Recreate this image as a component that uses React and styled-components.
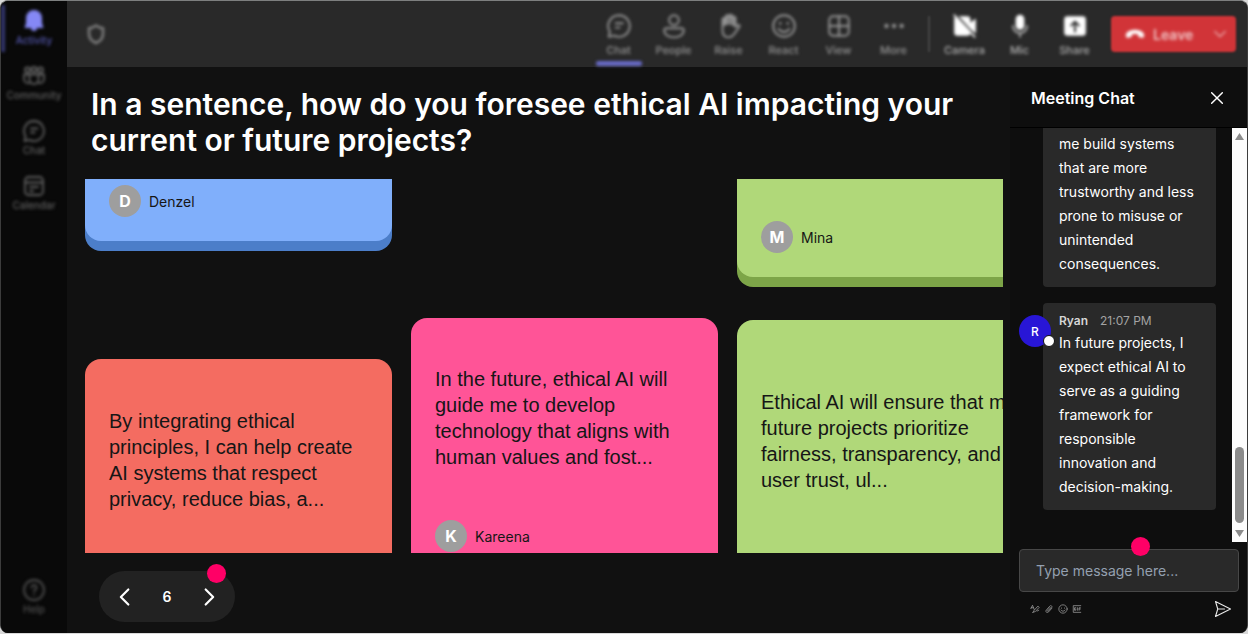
import React from 'react';
import styled, {createGlobalStyle, css} from 'styled-components';

const GlobalStyle = createGlobalStyle`
  *,
  *::after {
    box-sizing: border-box;
  }
  body {
    margin: 0;
    background: #d9d9d9;
    font-family: Inter, 'Noto Sans', sans-serif;
    color: #fff;
  }
  button {
    font-family: inherit;
    color: inherit;
    background: none;
    border: none;
    padding: 0;
    cursor: pointer;
  }
`;

const soften = css`
  filter: blur(1px) blur(1px);
`;

const Frame = styled.div`
  display: flex;
  height: calc(100vh - 1px);
  overflow: hidden;
  border-radius: 8px;
  border: 1px solid #3c3c3c;
  border-top-color: #7d7f7f;
  border-bottom: none;
  background: #111;
`;

const SideNav = styled.nav`
  display: flex;
  flex-direction: column;
  flex: none;
  width: 66px;
  padding: 4px 0;
  background: #090909;
`;

const SideItem = styled.button`
  display: flex;
  flex-direction: column;
  align-items: center;
  flex: none;
  gap: 1px;
  height: 47px;
  margin-bottom: 8px;
  padding-top: 4px;
  font-size: 10px;
  line-height: 12px;
  font-weight: 500;
  color: #606060;
  border-left: 4px solid transparent;
  border-right: 4px solid transparent;
  ${soften}
  ${(props) =>
    props.$active &&
    css`
      color: #5558b0;
      border-left-color: #34376f;
      svg {
        color: #8588f5;
      }
    `}
  ${(props) =>
    props.$last &&
    css`
      margin-top: auto;
      color: #505050;
    `}
`;

const Content = styled.div`
  display: flex;
  flex-direction: column;
  flex: 1;
  min-width: 0;
`;

const TopBar = styled.header`
  display: flex;
  align-items: center;
  flex: none;
  height: 66px;
  padding: 0 11px 0 17px;
  background: #292929;
`;

const Shield = styled.div`
  display: flex;
  margin-right: auto;
  color: #808080;
  ${soften}
`;

const Tools = styled.div`
  display: flex;
`;

const Tool = styled.button`
  display: flex;
  flex-direction: column;
  align-items: center;
  gap: 4px;
  width: 55px;
  height: 66px;
  padding-top: 12px;
  font-size: 11px;
  line-height: 14px;
  font-weight: 500;
  color: ${(props) => (props.$bright ? '#b0b0b0' : '#949494')};
  ${soften}
  svg {
    color: ${(props) => (props.$bright ? '#fff' : '#949494')};
  }
  &::after {
    content: '';
    width: 46px;
    height: 5px;
    border-radius: 2px;
    background: ${(props) => (props.$active ? '#686bc8' : 'transparent')};
  }
`;

const Divider = styled.div`
  width: 2px;
  height: 36px;
  margin: 0 7px;
  background: #444;
  filter: blur(1px);
`;

const LeaveButton = styled.button`
  display: flex;
  align-items: center;
  gap: 8px;
  width: 125px;
  height: 36px;
  margin-left: 9px;
  padding: 0 8px 0 14px;
  border-radius: 4px;
  background: #d13438;
  color: #f0c4c5;
  font-size: 14px;
  font-weight: 600;
  filter: blur(1px);
  span,
  svg {
    filter: blur(1px);
  }
  svg:first-child {
    color: #fff;
  }
  svg:last-child {
    margin-left: auto;
  }
`;

const Body = styled.div`
  display: flex;
  flex: 1;
  min-height: 0;
`;

const Main = styled.main`
  display: flex;
  flex-direction: column;
  flex: 1;
  min-width: 0;
  padding: 19px 7px 11px 18px;
`;

const Question = styled.h1`
  flex: none;
  margin: 0 6px 21px;
  font-size: 30px;
  line-height: 36px;
  font-weight: 600;
`;

const Board = styled.div`
  display: flex;
  gap: 19px;
  flex: 1;
  min-height: 0;
  overflow: hidden;
`;

const Column = styled.div`
  flex: none;
  width: 307px;
  padding-top: ${(props) => props.$offset || 0}px;
`;

const Card = styled.article`
  min-height: ${(props) => (props.$scrolled ? 0 : 260)}px;
  margin-bottom: ${(props) => props.$gap || 0}px;
  padding: ${(props) => props.$top}px 24px 24px;
  border-radius: ${(props) => (props.$scrolled ? '0 0 16px 16px' : '16px')};
  background: ${(props) => props.$color};
  box-shadow: 0 10px 0 ${(props) => props.$edge};
  color: #161616;
`;

const Answer = styled.p`
  margin: 0 0 50px;
  font-family: 'Liberation Sans', Arial, sans-serif;
  font-size: 20px;
  line-height: 26px;
`;

const Author = styled.div`
  display: flex;
  align-items: center;
  gap: 8px;
  font-size: 14px;
`;

const Initial = styled.span`
  display: flex;
  align-items: center;
  justify-content: center;
  width: 32px;
  height: 32px;
  border-radius: 50%;
  background: #9e9e9e;
  color: #fff;
  font-size: 16px;
  font-weight: 700;
`;

const Pager = styled.div`
  position: relative;
  display: flex;
  align-items: center;
  justify-content: space-between;
  flex: none;
  width: 136px;
  height: 51px;
  margin: 18px 0 0 14px;
  padding: 0 16px;
  border-radius: 26px;
  background: #222;
  font-size: 14px;
  font-weight: 600;
  button {
    display: flex;
  }
`;

const Marker = styled.span`
  position: absolute;
  top: ${(props) => props.$top}px;
  right: ${(props) => props.$right}px;
  width: 19px;
  height: 19px;
  border-radius: 50%;
  background: #ff0066;
`;

const ChatPanel = styled.aside`
  display: flex;
  flex-direction: column;
  flex: none;
  width: 237px;
  background: #0e0e0e;
`;

const ChatHeader = styled.div`
  display: flex;
  align-items: center;
  justify-content: space-between;
  flex: none;
  height: 61px;
  padding: 2px 22px 0 21px;
  border-bottom: 1px solid #000;
  h2 {
    margin: 0;
    font-size: 16px;
    font-weight: 600;
  }
  button {
    display: flex;
  }
`;

const ChatBody = styled.div`
  display: flex;
  flex: 1;
  min-height: 0;
`;

const Messages = styled.div`
  display: flex;
  flex-direction: column;
  justify-content: flex-end;
  gap: 16px;
  flex: 1;
  min-width: 0;
  padding: 0 16px 32px 33px;
  overflow: hidden;
`;

const Bubble = styled.div`
  position: relative;
  padding: 8px 16px 11px;
  border-radius: 4px;
  background: #292929;
  p {
    margin: 0;
    font-size: 14px;
    line-height: 24px;
  }
`;

const BubbleHead = styled.div`
  display: flex;
  gap: 12px;
  font-size: 12px;
  line-height: 20px;
  color: #a3a3a3;
  strong {
    font-weight: 600;
    color: #d6d6d6;
  }
`;

const Avatar = styled.span`
  position: absolute;
  top: 12px;
  left: -24px;
  display: flex;
  align-items: center;
  justify-content: center;
  width: 32px;
  height: 32px;
  border-radius: 50%;
  background: #2816d6;
  font-size: 12px;
  font-weight: 500;
  &::after {
    content: '';
    position: absolute;
    right: -4px;
    bottom: 0;
    width: 12px;
    height: 12px;
    border: 1px solid #111;
    border-radius: 50%;
    background: #fff;
  }
`;

const Scrollbar = styled.div`
  display: flex;
  flex-direction: column;
  align-items: center;
  width: 15px;
  padding: 5px 0;
  background: #fcfcfc;
`;

const Thumb = styled.div`
  width: 9px;
  height: 76px;
  margin: auto 0 7px;
  border-radius: 5px;
  background: #8b8b8b;
`;

const Composer = styled.form`
  position: relative;
  flex: none;
  padding: 7px 8px 15px 9px;
`;

const MessageInput = styled.input`
  display: block;
  width: 100%;
  height: 43px;
  padding: 0 16px;
  border: 1px solid #474747;
  border-radius: 4px;
  background: #292929;
  color: #fff;
  font-family: inherit;
  font-size: 14px;
  &::placeholder {
    color: #94a0b0;
    opacity: 1;
  }
`;

const ComposerTools = styled.div`
  display: flex;
  align-items: center;
  gap: 4px;
  margin-top: 8px;
  padding: 0 7px 0 11px;
  button {
    display: flex;
    color: #a0a0a0;
  }
  button:last-child {
    margin-left: auto;
    color: #e4e4e4;
  }
`;

function Icon({size = 24, width = 1.8, children}) {
  return (
    <svg
      width={size}
      height={size}
      viewBox="0 0 24 24"
      fill="none"
      stroke="currentColor"
      strokeWidth={width}
      strokeLinecap="round"
      strokeLinejoin="round"
      aria-hidden="true"
    >
      {children}
    </svg>
  );
}

const drawings = {
  bell: (
    <path
      d="M12 1a8 8 0 0 0-8 8v5l-1.500 5h19L20 14V9a8 8 0 0 0-8-8Zm-3 18a3 3 0 0 0 6 0Z"
      fill="currentColor"
      stroke="none"
    />
  ),
  community: (
    <>
      <circle cx="5.500" cy="6" r="2.500" />
      <circle cx="12" cy="5.500" r="2.500" />
      <circle cx="18.500" cy="6" r="2.500" />
      <path d="M7.500 10.500h9v5a4.500 4.500 0 0 1-9 0v-5Z" />
      <path d="M7 10.500H2V15a4 4 0 0 0 5.500 3.800M17 10.500h5V15a4 4 0 0 1-5.500 3.800" />
    </>
  ),
  chat: (
    <>
      <path d="M12 2a10 10 0 1 1-4.600 18.900L2.500 22l1.100-4.600A10 10 0 0 1 12 2Z" />
      <path d="M9 9.500h6.500M9 13.500h3.500" />
    </>
  ),
  calendar: (
    <>
      <rect x="3" y="3" width="18" height="18" rx="3.500" />
      <path d="M3 8.500h18M8 13h8M8 17h3" />
    </>
  ),
  help: (
    <>
      <circle cx="12" cy="12" r="10" />
      <path d="M9.500 9.500a2.500 2.500 0 1 1 3.800 2.200c-.9.600-1.300 1-1.300 2.100M12 16.800v.2" />
    </>
  ),
  shield: <path d="M12 3.500c2 1.500 4.500 2.500 7 2.700V12c0 4.500-2.500 7-7 9-4.500-2-7-4.500-7-9V6.200c2.500-.2 5-1.200 7-2.700Z" />,
  people: (
    <>
      <circle cx="12" cy="6.500" r="4.500" />
      <path d="M5 14h14a2 2 0 0 1 2 2c0 4-4 6.500-9 6.500S3 20 3 16a2 2 0 0 1 2-2Z" />
    </>
  ),
  raise: (
    <>
      <path d="M6 13V6a1.500 1.500 0 0 1 3 0V3.500a1.500 1.500 0 0 1 3 0V3a1.500 1.500 0 0 1 3 0v2a1.500 1.500 0 0 1 3 0v8l2-1.800c1.500-.7 2.300.6 1.500 1.700L17 19c-1.500 2.500-3 3.500-5.500 3.500C8 22.500 6 20 6 16Z" />
      <path d="M7.500 6v5M10 4v6M13 3v7M16 5v6" strokeWidth="2.500" />
    </>
  ),
  react: (
    <>
      <circle cx="12" cy="12" r="10" />
      <path d="M8.500 9.500v.2M15.500 9.500v.2" strokeWidth="2.500" />
      <path d="M7 14.500c2.500 4 7.500 4 10 0" />
    </>
  ),
  view: (
    <>
      <rect x="3" y="3" width="18" height="18" rx="3.500" />
      <path d="M12 3v18M3 12h18" />
    </>
  ),
  more: <path d="M5 12h.1M12 12h.1M19 12h.1" strokeWidth="4" />,
  camera: (
    <>
      <path d="M3 3h11a3 3 0 0 1 3 3v3l5-4v14l-5-4v3a3 3 0 0 1-3 3H5a3 3 0 0 1-3-3V5Z" fill="currentColor" stroke="none" />
      <path d="M4 2l18 20" stroke="#292929" strokeWidth="2" />
      <path d="M2 2l19 20" strokeWidth="1.500" />
    </>
  ),
  mic: (
    <>
      <rect x="8" y="1.500" width="8" height="14" rx="4" fill="currentColor" stroke="none" />
      <path d="M5.500 12a6.500 6.500 0 0 0 13 0M12 18.500V22" opacity="0.6" />
    </>
  ),
  share: (
    <>
      <rect x="2" y="3" width="20" height="18" rx="3" fill="currentColor" stroke="none" />
      <path d="M12 17V8.500M8.500 11.500 12 8l3.500 3.500" stroke="#292929" />
    </>
  ),
  hangup: (
    <path
      d="M12 7C6.500 7 1 9.500 1 13.500c0 2.500 1.200 3.300 3 3l2.500-.6c1-.3 1.700-1.200 1.800-2.200l.1-1.200c2.400-.7 4.800-.7 7.200 0l.1 1.200c.1 1 .8 1.900 1.800 2.200l2.500.6c1.800.3 3-.5 3-3C23 9.500 17.500 7 12 7Z"
      fill="currentColor"
      stroke="none"
    />
  ),
  down: <path d="m4 8 8 8 8-8" />,
  left: <path d="M16 3 7 12l9 9" />,
  right: <path d="m8 3 9 9-9 9" />,
  close: <path d="m4 4 16 16M20 4 4 20" />,
  format: (
    <>
      <path d="M2 11 6 3l4 10M3 9h5" />
      <path d="m7 20 3-5 9-10 3 3-9 10-6 2ZM17 17l4-2" />
    </>
  ),
  attach: <path d="m19 10-8 9c-4 4-9-1-5-5l8-9c3-3 7 1 4 4l-8 8c-2 1-3-1-2-2l7-7" />,
  gif: <path d="M21 4H3v16h18M9 9H6v6h3v-3M13 9v6M20 9h-3v6M17 12h3" />,
  send: <path d="M2 2 22 12 2 22l3-10L2 2ZM5 12h9" />,
};

const sideItems = [
  {label: 'Activity', icon: 'bell', active: true},
  {label: 'Community', icon: 'community'},
  {label: 'Chat', icon: 'chat'},
  {label: 'Calendar', icon: 'calendar'},
  {label: 'Help', icon: 'help', last: true},
];

const meetingTools = [
  {label: 'Chat', icon: 'chat', active: true},
  {label: 'People', icon: 'people'},
  {label: 'Raise', icon: 'raise'},
  {label: 'React', icon: 'react'},
  {label: 'View', icon: 'view'},
  {label: 'More', icon: 'more'},
];

const deviceTools = [
  {label: 'Camera', icon: 'camera'},
  {label: 'Mic', icon: 'mic'},
  {label: 'Share', icon: 'share'},
];

const columns = [
  {
    cards: [
      {name: 'Denzel', color: '#80affb', edge: '#4c7ec9', top: 6, gap: 118, scrolled: true},
      {
        text: 'By integrating ethical principles, I can help create AI systems that respect privacy, reduce bias, a...',
        color: '#f46c61',
        edge: '#c14a41',
        top: 49,
      },
    ],
  },
  {
    offset: 139,
    cards: [
      {
        name: 'Kareena',
        text: 'In the future, ethical AI will guide me to develop technology that aligns with human values and fost...',
        color: '#ff5497',
        edge: '#c93a72',
        top: 48,
      },
    ],
  },
  {
    cards: [
      {name: 'Mina', color: '#b0d879', edge: '#7da548', top: 42, gap: 43, scrolled: true},
      {
        text: 'Ethical AI will ensure that my future projects prioritize fairness, transparency, and user trust, ul...',
        color: '#b0d879',
        edge: '#7da548',
        top: 69,
      },
    ],
  },
];

function StickyCard({card}) {
  return (
    <Card
      $color={card.color}
      $edge={card.edge}
      $top={card.top}
      $gap={card.gap}
      $scrolled={card.scrolled}
    >
      {card.text && <Answer>{card.text}</Answer>}
      {card.name && (
        <Author>
          <Initial>{card.name[0]}</Initial>
          {card.name}
        </Author>
      )}
    </Card>
  );
}

function Chat() {
  return (
    <ChatPanel>
      <ChatHeader>
        <h2>Meeting Chat</h2>
        <button aria-label="Close chat">
          <Icon size={16} width={2.2}>{drawings.close}</Icon>
        </button>
      </ChatHeader>
      <ChatBody>
        <Messages>
          <Bubble>
            <p>
              me build systems that are more trustworthy and less prone to misuse or unintended
              consequences.
            </p>
          </Bubble>
          <Bubble>
            <Avatar>R</Avatar>
            <BubbleHead>
              <strong>Ryan</strong>
              <span>21:07 PM</span>
            </BubbleHead>
            <p>
              In future projects, I expect ethical AI to serve as a guiding framework for
              responsible innovation and decision-making.
            </p>
          </Bubble>
        </Messages>
        <Scrollbar aria-hidden="true">
          <svg width="9" height="7" viewBox="0 0 9 7">
            <path d="M4.500 0 9 7H0Z" fill="#8b8b8b" />
          </svg>
          <Thumb />
          <svg width="9" height="7" viewBox="0 0 9 7">
            <path d="M4.500 7 9 0H0Z" fill="#8b8b8b" />
          </svg>
        </Scrollbar>
      </ChatBody>
      <Composer onSubmit={(ev) => ev.preventDefault()}>
        <MessageInput type="text" aria-label="Message" placeholder="Type message here..." />
        <Marker $top={-5} $right={97} />
        <ComposerTools>
          <button type="button" aria-label="Format">
            <Icon size={10}>{drawings.format}</Icon>
          </button>
          <button type="button" aria-label="Attach">
            <Icon size={10}>{drawings.attach}</Icon>
          </button>
          <button type="button" aria-label="Emoji">
            <Icon size={10}>{drawings.react}</Icon>
          </button>
          <button type="button" aria-label="GIF">
            <Icon size={10}>{drawings.gif}</Icon>
          </button>
          <button type="submit" aria-label="Send">
            <Icon size={18} width={1.5}>{drawings.send}</Icon>
          </button>
        </ComposerTools>
      </Composer>
    </ChatPanel>
  );
}

function App() {
  return (
    <>
      <GlobalStyle />
      <Frame>
        <SideNav>
          {sideItems.map((item) => (
            <SideItem key={item.label} $active={item.active} $last={item.last}>
              <Icon>{drawings[item.icon]}</Icon>
              {item.label}
            </SideItem>
          ))}
        </SideNav>
        <Content>
          <TopBar>
            <Shield>
              <Icon width={2.5}>{drawings.shield}</Icon>
            </Shield>
            <Tools>
              {meetingTools.map((item) => (
                <Tool key={item.label} $active={item.active}>
                  <Icon size={26}>{drawings[item.icon]}</Icon>
                  {item.label}
                </Tool>
              ))}
            </Tools>
            <Divider />
            <Tools>
              {deviceTools.map((item) => (
                <Tool key={item.label} $bright>
                  <Icon size={26}>{drawings[item.icon]}</Icon>
                  {item.label}
                </Tool>
              ))}
            </Tools>
            <LeaveButton>
              <Icon size={20}>{drawings.hangup}</Icon>
              <span>Leave</span>
              <Icon size={16}>{drawings.down}</Icon>
            </LeaveButton>
          </TopBar>
          <Body>
            <Main>
              <Question>
                In a sentence, how do you foresee ethical AI impacting your current or future
                projects?
              </Question>
              <Board>
                {columns.map((column, i) => (
                  <Column key={i} $offset={column.offset}>
                    {column.cards.map((card, j) => (
                      <StickyCard key={j} card={card} />
                    ))}
                  </Column>
                ))}
              </Board>
              <Pager>
                <button aria-label="Previous page">
                  <Icon size={20} width={2.6}>{drawings.left}</Icon>
                </button>
                6
                <button aria-label="Next page">
                  <Icon size={20} width={2.6}>{drawings.right}</Icon>
                </button>
                <Marker $top={-7} $right={9} />
              </Pager>
            </Main>
            <Chat />
          </Body>
        </Content>
      </Frame>
    </>
  );
}

export default App;
